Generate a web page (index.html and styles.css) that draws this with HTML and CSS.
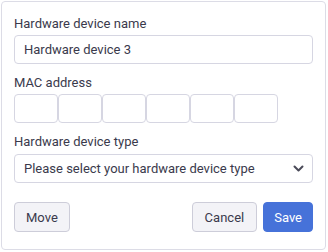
FILE: index.html
```html
<!DOCTYPE html>
<html lang="en">
<head>
    <meta charset="UTF-8">
    <title>Hardware device</title>
    <link rel="stylesheet" href="styles.css">
</head>
<body>

    <div class="card">
        <label class="label">Hardware device name</label>
        <input class="field" type="text" value="Hardware device 3">

        <label class="label">MAC address</label>
        <div class="mac">
            <input class="mac-part" type="text">
            <input class="mac-part" type="text">
            <input class="mac-part" type="text">
            <input class="mac-part" type="text">
            <input class="mac-part" type="text">
            <input class="mac-part" type="text">
        </div>

        <label class="label">Hardware device type</label>
        <div class="select">
            <span>Please select your hardware device type</span>
            <svg width="11" height="7" viewBox="0 0 11 7"><path d="M1.5 1.5l4 4 4-4" fill="none" stroke="#4a4a58" stroke-width="2" stroke-linecap="round" stroke-linejoin="round"/></svg>
        </div>

        <div class="actions">
            <button class="button">Move</button>
            <div class="spacer"></div>
            <button class="button cancel">Cancel</button>
            <button class="button primary">Save</button>
        </div>
    </div>

</body>
</html>
```

FILE: styles.css
```css
* {
    margin: 0;
    padding: 0;
    box-sizing: border-box;
}

body {
    margin: 1px;
    font-family: Roboto, 'Liberation Sans', sans-serif;
    font-size: 13px;
    color: #3a3a4c;
    background: #fff;
}

.card {
    width: 325px;
    height: 249px;
    border: 1px solid #dcdce6;
    border-radius: 4px;
    padding: 13px 12px 12px;
    display: flex;
    flex-direction: column;
}

.label {
    display: block;
    line-height: 18px;
    margin-bottom: 2px;
}

.field,
.select {
    width: 100%;
    height: 29px;
    border: 1px solid #d6d6e2;
    border-radius: 4px;
    padding: 0 9px;
    font-family: inherit;
    font-size: 13px;
    color: #3a3a4c;
    margin-bottom: 10px;
}

.mac {
    display: flex;
    margin-bottom: 10px;
}

.mac-part {
    width: 44px;
    height: 29px;
    border: 1px solid #d6d6e2;
    border-radius: 4px;
}

.select {
    display: flex;
    align-items: center;
    justify-content: space-between;
    padding-right: 8px;
    margin-top: 1px;
}

.actions {
    display: flex;
    gap: 6px;
    margin-top: 9px;
}

.spacer {
    flex: 1;
}

.button {
    height: 30px;
    padding: 0 11px;
    border: 1px solid #cdcdd9;
    border-radius: 4px;
    background: #f3f3f7;
    font-family: inherit;
    font-size: 13px;
    color: #3a3a4c;
}

.button.cancel {
    padding: 0 12px;
}

.button.primary {
    padding: 0 10px;
    background: #4672d9;
    border-color: #4672d9;
    color: #fff;
}
```
